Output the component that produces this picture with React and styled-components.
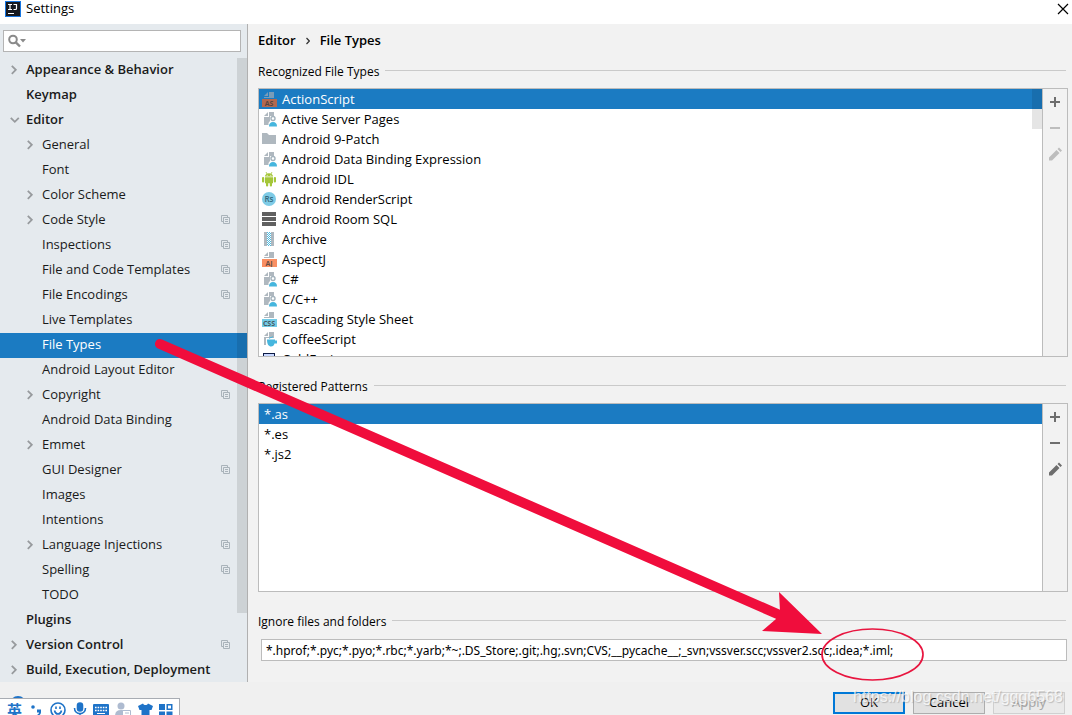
import React from "react";
import styled, { createGlobalStyle } from "styled-components";

const GlobalStyle = createGlobalStyle`
  * {
    box-sizing: border-box;
  }
  body {
    margin: 0;
    overflow: hidden;
    font-family: "Open Sans", "Noto Sans", "Noto Sans CJK SC", sans-serif;
    font-size: 13px;
    color: #1a1a1a;
  }
`;

const Window = styled.div`
  position: relative;
  display: flex;
  flex-direction: column;
  height: 100vh;
  overflow: hidden;
  background: #f0f0f0;
`;

const TitleBar = styled.header`
  display: flex;
  align-items: center;
  gap: 5px;
  height: 24px;
  padding: 0 3px 7px 5px;
  background: #fff;
  color: #000;
`;

const Title = styled.h1`
  flex: 1;
  margin: 0;
  font-size: 13px;
  font-weight: 400;
  line-height: 17px;
`;

const IconButton = styled.button`
  display: flex;
  padding: 0;
  border: none;
  background: none;
  color: ${(p) => (p.$faded ? "#bdbdbd" : "#6e6e6e")};
`;

const Body = styled.div`
  display: flex;
  flex: 1;
  min-height: 0;
`;

const Sidebar = styled.aside`
  display: flex;
  flex-direction: column;
  flex: 0 0 248px;
  border-right: 1px solid #b0b0b0;
  background: #e5eaee;
`;

const SearchBox = styled.label`
  display: flex;
  align-items: center;
  height: 22px;
  margin: 6px 6px 6px 3px;
  padding-left: 4px;
  border: 1px solid #b4b4b4;
  background: #fff;
`;

const SearchInput = styled.input`
  flex: 1;
  min-width: 0;
  border: none;
  outline: none;
  background: transparent;
  font: inherit;
`;

const Tree = styled.nav`
  position: relative;
  flex: 1;
  min-height: 0;
  overflow: hidden;
`;

const TreeRow = styled.a`
  display: flex;
  align-items: center;
  height: 25px;
  padding-left: ${(p) => (p.$level ? 26 : 10)}px;
  padding-right: 17px;
  padding-bottom: 2px;
  background: ${(p) => (p.$selected ? "#1b7bc2" : "transparent")};
  color: ${(p) => (p.$selected ? "#fff" : "#1a1a1a")};
  font-weight: ${(p) => (p.$level ? 400 : 600)};
  line-height: 20px;
  text-decoration: none;
  white-space: nowrap;
`;

const Slot = styled.span`
  display: flex;
  flex: 0 0 16px;
`;

const RowLabel = styled.span`
  flex: 1;
  padding-bottom: 2px;
`;

const Thumb = styled.div`
  position: absolute;
  top: 0;
  right: 0;
  width: 10px;
  height: ${(p) => p.$size};
  background: rgba(0, 0, 0, 0.1);
`;

const Main = styled.main`
  display: flex;
  flex-direction: column;
  flex: 1;
  min-width: 0;
  padding: 8px 4px 21px 10px;
  background: #f2f2f2;
  color: #000;
`;

const Breadcrumb = styled.h2`
  display: flex;
  align-items: center;
  gap: 10px;
  margin: 0 0 15px;
  font-size: 13px;
  font-weight: 600;
  line-height: 17px;
`;

const Section = styled.section`
  display: flex;
  flex-direction: column;
  flex: ${(p) => (p.$grow ? `${p.$grow} 1 0` : "none")};
  min-height: 0;
  margin-bottom: ${(p) => (p.$grow ? 22 : 0)}px;
`;

const Heading = styled.h3`
  display: flex;
  align-items: center;
  gap: 6px;
  margin: 0 2px 8px 0;
  font-size: 12px;
  font-weight: 400;
  line-height: 16px;
  white-space: nowrap;

  &::after {
    content: "";
    flex: 1;
    height: 1px;
    margin-bottom: 3px;
    background: #cacaca;
  }
`;

const Panel = styled.div`
  display: flex;
  flex: 1 1 0;
  min-height: 0;
  border: 1px solid #bcbcbc;
`;

const ListArea = styled.div`
  position: relative;
  flex: 1;
  overflow: hidden;
  background: #fff;
`;

const List = styled.ul`
  margin: 0;
  padding: 0;
  list-style: none;
`;

const Item = styled.li`
  display: flex;
  align-items: center;
  gap: 4px;
  height: 20px;
  padding: 0 ${(p) => (p.$plain ? 5 : 3)}px;
  background: ${(p) => (p.$selected ? "#1b7bc2" : "transparent")};
  color: ${(p) => (p.$selected ? "#fff" : "#000")};
  line-height: 20px;
  white-space: nowrap;
`;

const Tools = styled.div`
  display: flex;
  flex-direction: column;
  align-items: center;
  gap: 10px;
  width: 25px;
  padding-top: 5px;
  border-left: 1px solid #bcbcbc;
`;

const IgnoreInput = styled.input`
  height: 22px;
  margin: 1px 1px 0 3px;
  padding: 0 4px;
  border: 1px solid #bcbcbc;
  background: #fff;
  color: #000;
  font-family: "Noto Sans", sans-serif;
  font-size: 12px;
`;

const Footer = styled.footer`
  display: flex;
  justify-content: flex-end;
  gap: 8px;
  height: 33px;
  padding: 10px 7px 0;
`;

const DialogButton = styled.button`
  width: 72px;
  height: 22px;
  padding: 0 0 2px;
  border: ${(p) => (p.$primary ? "2px solid #0078d7" : "1px solid #adadad")};
  background: #e1e1e1;
  color: #000;
  font: inherit;
  line-height: 16px;

  &:disabled {
    border-color: #d0d0d0;
    background: #eaeaea;
    color: #a5a5a5;
  }
`;

const Ime = styled.div`
  position: absolute;
  left: 0;
  bottom: 0;
  display: flex;
  align-items: flex-start;
  gap: 6px;
  width: 180px;
  height: 17px;
  padding: 3px 4px 0 7px;
  overflow: hidden;
  border: 1px solid #a8acb3;
  border-width: 1px 1px 0 0;
  background: #fff;
  color: #1e73c8;
`;

const ImeMode = styled.span`
  width: 16px;
  font-family: "Noto Sans CJK SC", sans-serif;
  font-size: 15px;
  font-weight: 700;
  line-height: 15px;
`;

const ImeBall = styled.div`
  position: absolute;
  left: 10px;
  bottom: 3px;
  width: 16px;
  height: 16px;
  border-radius: 50%;
  background: #1e73c8;
`;

const Annotation = styled.svg`
  position: absolute;
  top: 0;
  left: 0;
  pointer-events: none;
`;

const Watermark = styled.div`
  position: absolute;
  right: 9px;
  bottom: 8px;
  color: rgba(255, 255, 255, 0.75);
  font-family: "Liberation Sans", sans-serif;
  font-size: 16px;
  line-height: 20px;
  text-shadow: 1px 1px 1px rgba(120, 120, 120, 0.4);
  pointer-events: none;
`;

const tree = [
  { name: "Appearance & Behavior", arrow: "right" },
  { name: "Keymap" },
  { name: "Editor", arrow: "down" },
  { name: "General", level: 1, arrow: "right" },
  { name: "Font", level: 1 },
  { name: "Color Scheme", level: 1, arrow: "right" },
  { name: "Code Style", level: 1, arrow: "right", copy: true },
  { name: "Inspections", level: 1, copy: true },
  { name: "File and Code Templates", level: 1, copy: true },
  { name: "File Encodings", level: 1, copy: true },
  { name: "Live Templates", level: 1 },
  { name: "File Types", level: 1, selected: true },
  { name: "Android Layout Editor", level: 1 },
  { name: "Copyright", level: 1, arrow: "right", copy: true },
  { name: "Android Data Binding", level: 1 },
  { name: "Emmet", level: 1, arrow: "right" },
  { name: "GUI Designer", level: 1, copy: true },
  { name: "Images", level: 1 },
  { name: "Intentions", level: 1 },
  { name: "Language Injections", level: 1, arrow: "right", copy: true },
  { name: "Spelling", level: 1, copy: true },
  { name: "TODO", level: 1 },
  { name: "Plugins" },
  { name: "Version Control", arrow: "right", copy: true },
  { name: "Build, Execution, Deployment", arrow: "right" },
];

const fileTypes = [
  { name: "ActionScript", icon: "as" },
  { name: "Active Server Pages", icon: "user" },
  { name: "Android 9-Patch", icon: "folder" },
  { name: "Android Data Binding Expression", icon: "user" },
  { name: "Android IDL", icon: "android" },
  { name: "Android RenderScript", icon: "rs" },
  { name: "Android Room SQL", icon: "sql" },
  { name: "Archive", icon: "archive" },
  { name: "AspectJ", icon: "aj" },
  { name: "C#", icon: "user" },
  { name: "C/C++", icon: "user" },
  { name: "Cascading Style Sheet", icon: "css" },
  { name: "CoffeeScript", icon: "coffee" },
  { name: "ColdFusion", icon: "cold" },
];

const patterns = ["*.as", "*.es", "*.js2"];

const ignored =
  "*.hprof;*.pyc;*.pyo;*.rbc;*.yarb;*~;.DS_Store;.git;.hg;.svn;CVS;__pycache__;_svn;vssver.scc;vssver2.scc;.idea;*.iml;";

function Arrow({ dir }) {
  return (
    <svg width="10" height="10" fill="none" stroke="#979a9d" strokeWidth="1.8">
      <path d={dir === "down" ? "M0.8 2.8L4.8 6.8L8.8 2.8" : "M1.8 0.8L5.8 4.8L1.8 8.8"} />
    </svg>
  );
}

function CopyIcon() {
  return (
    <svg width="9" height="9" fill="none" stroke="#a9b3ba">
      <path d="M2.5 6.5H0.5V0.5H6.5V2M2.5 2.5H8.5V8.5H2.5ZM4 4.5H7M4 6.5H7" />
    </svg>
  );
}

function Badge({ text, fill, page = "#afb8bf" }) {
  return (
    <>
      <path d="M2 5L6 1V5ZM7 1H12V7H2V6H7Z" fill={page} />
      <rect y="8" width="15" height="8" fill={fill} />
      <text x="7" y="15" fontSize="7" fontWeight="700" textAnchor="middle" fill="#3b3b3b" fillOpacity=".8">
        {text}
      </text>
    </>
  );
}

const page = <path d="M2 5L6 1V5ZM7 1H12V14H2V6H7Z" fill="#afb8bf" />;

const drawings = {
  as: <Badge text="AS" fill="#b3684f" page="#7a9cb8" />,
  aj: <Badge text="AJ" fill="#f98f63" />,
  css: <Badge text="CSS" fill="#74cbe6" />,
  user: (
    <>
      {page}
      <path d="M6.500 16V12L8 10V5H14V10L16 12V16Z" fill="#fff" />
      <circle cx="11" cy="7.500" r="2" fill="none" stroke="#a3b2bc" strokeWidth="1.400" />
      <path d="M7 15.500C7 12.500 8.500 11 11 11S15 12.500 15 15.500Z" fill="#46b6de" />
    </>
  ),
  folder: <path d="M0 2H5L7 4H14V13H0Z" fill="#afb8bf" />,
  android: (
    <g fill="#a4c639">
      <path d="M3 5.500C3 3.500 4.500 2.200 7 2.200S11 3.500 11 5.500ZM3 6.200H11V12.200H3Z" />
      <rect y="6" width="2.200" height="5.500" rx="1" />
      <rect x="11.800" y="6" width="2.200" height="5.500" rx="1" />
      <rect x="4" y="11" width="2.200" height="4.500" rx="1" />
      <rect x="7.800" y="11" width="2.200" height="4.500" rx="1" />
      <path d="M4 1L5 3M10 1L9 3" stroke="#a4c639" strokeWidth=".8" />
      <circle cx="5.200" cy="4.200" r=".5" fill="#fff" />
      <circle cx="8.800" cy="4.200" r=".5" fill="#fff" />
    </g>
  ),
  rs: (
    <>
      <circle cx="7" cy="8" r="7" fill="#7ecbe6" />
      <text x="7" y="11" fontSize="8" fontWeight="600" textAnchor="middle" fill="#35697d">
        Rs
      </text>
    </>
  ),
  sql: <path d="M0 1H14V5H0ZM0 6H14V10H0ZM0 11H14V15H0Z" fill="#606060" />,
  archive: (
    <>
      <path d="M2 1H5V15H2ZM9 1H12V15H9Z" fill="#afb8bf" />
      <path d="M5.500 1V15M7.500 1V15" stroke="#4fb9de" strokeDasharray="1 1" />
      <path d="M6.500 2V15M8.500 2V15" stroke="#4fb9de" strokeDasharray="1 1" />
    </>
  ),
  coffee: (
    <>
      {page}
      <path d="M4 7H16V16H4Z" fill="#fff" />
      <path d="M5 8.500H13V9.500H15V12.500H12.500C12 14.500 11 15.500 9 15.500S5 13.500 5 8.500Z" fill="#46b6de" />
      <path d="M7 7.500C8 6 10 7 11 5.500" stroke="#46b6de" fill="none" />
    </>
  ),
  cold: <rect x="1.500" y="2.500" width="11" height="11" fill="#c7d7ff" stroke="#0c1a45" />,
};

function FileIcon({ name }) {
  return (
    <svg width="16" height="16" viewBox="0 0 16 16">
      {drawings[name]}
    </svg>
  );
}

function ListTools({ locked }) {
  return (
    <Tools>
      <IconButton aria-label="Add">
        <svg width="16" height="16">
          <path d="M3 8H13M8 3V13" stroke="currentColor" strokeWidth="2" />
        </svg>
      </IconButton>
      <IconButton aria-label="Remove" $faded={locked}>
        <svg width="16" height="16">
          <path d="M3 8H13" stroke="currentColor" strokeWidth="2" />
        </svg>
      </IconButton>
      <IconButton aria-label="Edit" $faded={locked}>
        <svg width="16" height="16" fill="currentColor">
          <path d="M2 11.500L9.500 4L12.500 7L5 14.500H2ZM10.500 3L12 1.500L15 4.500L13.500 6Z" />
        </svg>
      </IconButton>
    </Tools>
  );
}

function ImeBar() {
  return (
    <Ime>
      <ImeMode>英</ImeMode>
      <svg width="16" height="16" fill="currentColor">
        <circle cx="4" cy="5" r="1.800" />
        <path d="M8 7.500H12V10C12 12 10.500 13.500 8.500 14V12.500C9.500 12 10 11.500 10 10.500H8Z" />
      </svg>
      <svg width="16" height="16" fill="none" stroke="currentColor" strokeWidth="1.6">
        <circle cx="8" cy="8" r="7" />
        <path d="M4.500 8.500C5 11 6.500 12 8 12S11 11 11.500 8.500M6 4.500V7M10 4.500V7" />
      </svg>
      <svg width="16" height="16" fill="none" stroke="currentColor" strokeWidth="1.6">
        <rect x="5.500" y="1" width="5" height="8" rx="2.500" fill="currentColor" />
        <path d="M2.500 6C2.500 13.500 13.500 13.500 13.500 6M8 11V15" />
      </svg>
      <svg width="16" height="16">
        <rect y="2" width="16" height="12" rx="1" fill="currentColor" />
        <path d="M2 5.500H14M2 8.500H14" stroke="#fff" strokeWidth="1.6" strokeDasharray="1.6 1" />
        <path d="M4 11.500H12" stroke="#fff" />
      </svg>
      <svg width="18" height="16" fill="#aebbd0">
        <circle cx="6" cy="4" r="3.500" />
        <path d="M0 14C0 10 2 8 6 8H9V14Z" />
        <path d="M7.500 8.500H15.500V15H7.500ZM10 11H14" fill="#fff" stroke="#aebbd0" />
      </svg>
      <svg width="16" height="16" fill="currentColor">
        <path d="M5 1.500C6 3.500 9 3.500 10 1.500L15 4L13.500 8H11.500V16H3.500V8H1.500L0 4Z" />
      </svg>
      <svg width="16" height="16" fill="currentColor">
        <path d="M0 2H6V8H0ZM0 9.500H6V15H0ZM7.500 9.500H13.500V15H7.500Z" />
        <rect x="8.250" y="2.750" width="4.500" height="4.500" fill="none" stroke="currentColor" strokeWidth="1.5" />
      </svg>
    </Ime>
  );
}

export default function App() {
  return (
    <>
      <GlobalStyle />
      <Window>
        <TitleBar>
          <svg width="16" height="16">
            <rect width="16" height="16" fill="#1876e0" />
            <rect x="1" y="1" width="14" height="14" fill="#16191f" />
            <path d="M3 3.500H7M5 3.500V8.500M3 8.500H7M8.500 3.500H11.500V7.500Q11.500 8.500 10.500 8.500H8.500M3 12.500H9" fill="none" stroke="#fff" strokeWidth="1.200" />
          </svg>
          <Title>Settings</Title>
          <IconButton aria-label="Close">
            <svg width="12" height="12">
              <path d="M1 1L11 11M11 1L1 11" stroke="#000" strokeWidth="1.200" />
            </svg>
          </IconButton>
        </TitleBar>

        <Body>
          <Sidebar>
            <SearchBox>
              <svg width="20" height="14" fill="none" stroke="#8a8a8a" strokeWidth="2">
                <circle cx="5" cy="5.500" r="3.800" />
                <path d="M7.800 8.300L12 12.500" strokeWidth="2.400" />
                <path d="M12 5H18L15 8.500Z" fill="#8a8a8a" stroke="none" />
              </svg>
              <SearchInput type="text" aria-label="Search settings" />
            </SearchBox>
            <Tree>
              {tree.map((node) => (
                <TreeRow key={node.name} href="#" $level={node.level} $selected={node.selected}>
                  <Slot>{node.arrow && <Arrow dir={node.arrow} />}</Slot>
                  <RowLabel>{node.name}</RowLabel>
                  {node.copy && <CopyIcon />}
                </TreeRow>
              ))}
              <Thumb $size="89%" />
            </Tree>
          </Sidebar>

          <Main>
            <Breadcrumb>
              <span>Editor</span>
              <svg width="4" height="8" fill="none" stroke="#333" strokeWidth="1.2">
                <path d="M0.500 1L3.300 4L0.500 7" />
              </svg>
              <span>File Types</span>
            </Breadcrumb>

            <Section $grow={293}>
              <Heading>Recognized File Types</Heading>
              <Panel>
                <ListArea>
                  <List>
                    {fileTypes.map((type, i) => (
                      <Item key={type.name} $selected={i === 0}>
                        <FileIcon name={type.icon} />
                        {type.name}
                      </Item>
                    ))}
                  </List>
                  <Thumb $size="40px" />
                </ListArea>
                <ListTools locked />
              </Panel>
            </Section>

            <Section $grow={213}>
              <Heading>Registered Patterns</Heading>
              <Panel>
                <ListArea>
                  <List>
                    {patterns.map((pattern, i) => (
                      <Item key={pattern} $plain $selected={i === 0}>
                        {pattern}
                      </Item>
                    ))}
                  </List>
                </ListArea>
                <ListTools />
              </Panel>
            </Section>

            <Section>
              <Heading as="label" htmlFor="ignored">
                Ignore files and folders
              </Heading>
              <IgnoreInput id="ignored" type="text" defaultValue={ignored} />
            </Section>
          </Main>
        </Body>

        <Footer>
          <DialogButton $primary>OK</DialogButton>
          <DialogButton>Cancel</DialogButton>
          <DialogButton disabled>Apply</DialogButton>
        </Footer>

        <ImeBall />
        <ImeBar />
        <Watermark>https://blog.csdn.net/ggg6568</Watermark>

        <Annotation width="1072" height="715">
          <path d="M160 344L782 616" stroke="#f00d3c" strokeWidth="10" strokeLinecap="round" />
          <path d="M822 634L779 592L780 611L776 619L762 631Z" fill="#f00d3c" />
          <ellipse cx="872.500" cy="654.500" rx="50.500" ry="25.500" fill="none" stroke="#e8153f" strokeWidth="1.700" />
        </Annotation>
      </Window>
    </>
  );
}
